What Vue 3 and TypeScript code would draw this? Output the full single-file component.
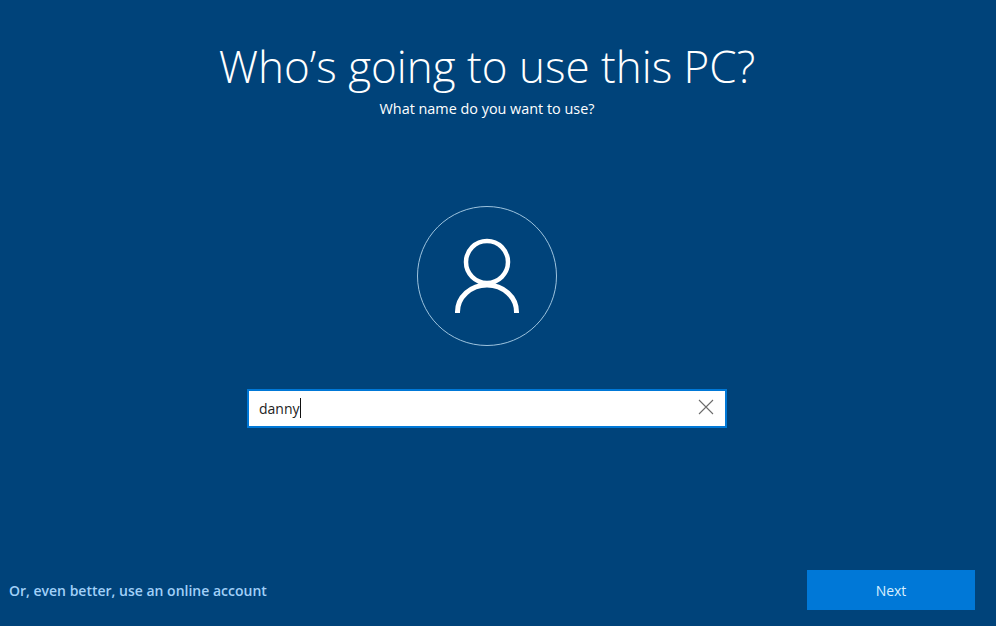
<template>
  <div class="page">
    <main class="content">
      <header class="heading">
        <h1>Who’s going to use this PC?</h1>
        <p>What name do you want to use?</p>
      </header>

      <div class="avatar">
        <svg width="140" height="140" viewBox="0 0 140 140" fill="none">
          <circle cx="70" cy="70" r="69.5" stroke="#9dc3de" stroke-width="1" />
          <circle cx="70" cy="56" r="21" stroke="#fff" stroke-width="4.5" />
          <path d="M40.5 107V106A29.5 27 0 0 1 99.5 106V107" stroke="#fff" stroke-width="5" />
        </svg>
      </div>

      <div class="name-box">
        <input v-model="name" class="name-input" type="text" aria-label="Name" />
        <span class="caret" />
        <button class="clear" type="button" aria-label="Clear" @click="name = ''">
          <svg width="16" height="16" viewBox="0 0 16 16" fill="none">
            <path d="M1 1L15 15M15 1L1 15" stroke="#6b6b6b" stroke-width="1.1" />
          </svg>
        </button>
      </div>
    </main>

    <footer class="actions">
      <a class="online-link" href="#">Or, even better, use an online account</a>
      <button class="next" type="button">Next</button>
    </footer>
  </div>
</template>

<script setup lang="ts">
import { ref } from 'vue'

const name = ref<string>('danny')
</script>

<style>
html,
body {
  margin: 0;
  background: #00437a;
}
</style>

<style scoped>
.page {
  height: 626px;
  box-sizing: border-box;
  display: flex;
  flex-direction: column;
  padding-top: 35px;
  background: #00437a;
  color: #fff;
  font-family: "Open Sans", "Liberation Sans", sans-serif;
  overflow: hidden;
}

/* the column sits 11px left of the window centre */
.content {
  width: 974px;
  display: flex;
  flex-direction: column;
  align-items: center;
}

.heading {
  text-align: center;
}

h1 {
  margin: 0;
  font-size: 44px;
  line-height: 62px;
  font-weight: 300;
}

.heading p {
  margin: 2px 0 0;
  font-size: 14.4px;
  line-height: 20px;
}

.avatar {
  margin-top: 87px;
  height: 140px;
}

.name-box {
  position: relative;
  box-sizing: border-box;
  width: 480px;
  height: 39px;
  margin-top: 43px;
  border: 2px solid #0078d7;
  background: #fff;
}

.name-input {
  display: block;
  width: 100%;
  height: 100%;
  box-sizing: border-box;
  padding: 0 40px 0 10px;
  border: 0;
  outline: 0;
  background: transparent;
  color: #222;
  font-family: inherit;
  font-size: 14px;
}

.caret {
  position: absolute;
  left: 51px;
  top: 7px;
  width: 1px;
  height: 20px;
  background: #111;
}

.clear {
  position: absolute;
  right: 11px;
  top: 8px;
  display: flex;
  padding: 0;
  border: 0;
  background: none;
}

.actions {
  margin-top: auto;
  margin-bottom: 16px;
  padding: 0 21px 0 9px;
  display: flex;
  justify-content: space-between;
  align-items: center;
}

.online-link {
  color: #a0d0f8;
  font-size: 14px;
  font-weight: 600;
  text-decoration: none;
}

.next {
  width: 168px;
  height: 40px;
  border: 0;
  background: #0078d7;
  color: #d9f0ff;
  font-family: inherit;
  font-size: 14px;
}
</style>
